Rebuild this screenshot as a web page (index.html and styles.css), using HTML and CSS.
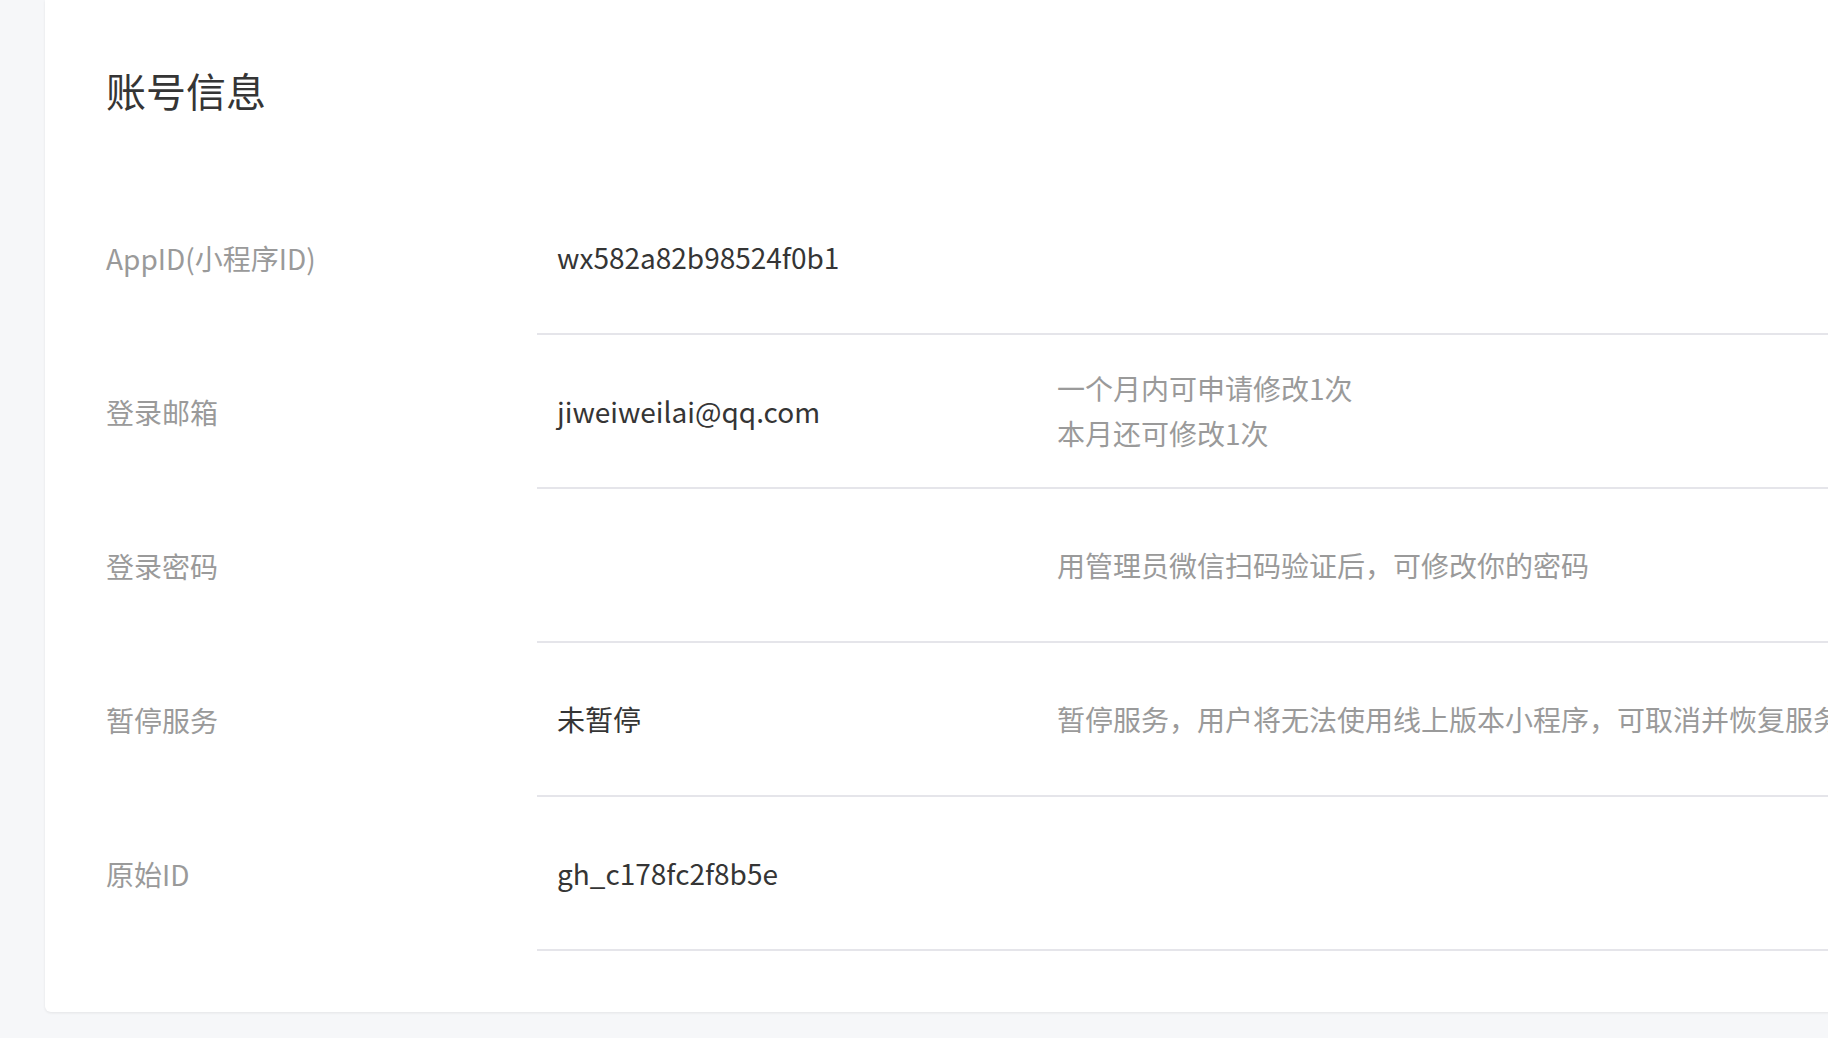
FILE: index.html
```html
<!DOCTYPE html>
<html lang="zh-CN">
<head>
    <meta charset="utf-8"/>
    <title>账号信息</title>
    <link rel="stylesheet" href="styles.css">
</head>
<body>
    <div class="page">
        <div class="card">
            <h2 class="card-title">账号信息</h2>
            <div class="info-list">
                <div class="info-row">
                    <div class="info-label">AppID(小程序ID)</div>
                    <div class="info-cell">
                        <div class="info-value">wx582a82b98524f0b1</div>
                        <div class="info-hint"></div>
                    </div>
                </div>
                <div class="info-row">
                    <div class="info-label">登录邮箱</div>
                    <div class="info-cell">
                        <div class="info-value">jiweiweilai@qq.com</div>
                        <div class="info-hint">一个月内可申请修改1次<br>本月还可修改1次</div>
                    </div>
                </div>
                <div class="info-row">
                    <div class="info-label">登录密码</div>
                    <div class="info-cell">
                        <div class="info-value"></div>
                        <div class="info-hint">用管理员微信扫码验证后，可修改你的密码</div>
                    </div>
                </div>
                <div class="info-row">
                    <div class="info-label">暂停服务</div>
                    <div class="info-cell">
                        <div class="info-value">未暂停</div>
                        <div class="info-hint">暂停服务，用户将无法使用线上版本小程序，可取消并恢复服务</div>
                    </div>
                </div>
                <div class="info-row">
                    <div class="info-label">原始ID</div>
                    <div class="info-cell">
                        <div class="info-value">gh_c178fc2f8b5e</div>
                        <div class="info-hint"></div>
                    </div>
                </div>
            </div>
        </div>
    </div>
</body>
</html>
```

FILE: styles.css
```css
html, body {
    margin: 0;
    padding: 0;
    height: 100%;
    overflow: hidden;
    background-color: #f6f7f9;
    font-family: "Noto Sans CJK SC", "Noto Sans", sans-serif;
    color: #353535;
}
.page {
    padding: 0 0 27px 45px;
    overflow: hidden;
}
.card {
    background: #ffffff;
    border-radius: 0 0 6px 6px;
    box-shadow: 0 1px 3px rgba(0, 0, 0, 0.08);
    margin-right: -200px;
    padding: 62px 0 61px 61px;
}
.card-title {
    margin: 0 0 63px;
    font-size: 40px;
    font-weight: 400;
    line-height: 56px;
    color: #353535;
}
.info-row {
    display: flex;
}
.info-label {
    width: 431px;
    flex-shrink: 0;
    display: flex;
    align-items: center;
    font-size: 28px;
    color: #9a9a9a;
}
.info-cell {
    flex: 1;
    display: flex;
    align-items: center;
    min-height: 152px;
    padding-left: 20px;
    border-bottom: 2px solid #e5e5ea;
}
.info-value {
    width: 500px;
    flex-shrink: 0;
    font-size: 28px;
    color: #353535;
}
.info-hint {
    font-size: 28px;
    line-height: 45px;
    color: #9a9a9a;
    white-space: nowrap;
}
```
